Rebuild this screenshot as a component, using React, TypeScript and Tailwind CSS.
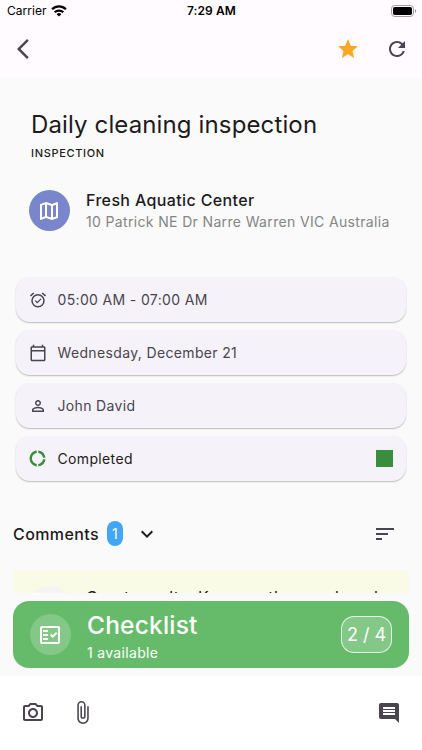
import type { ReactNode } from "react";
import {
  MdArrowBackIosNew,
  MdAttachFile,
  MdComment,
  MdExpandMore,
  MdOutlineCalendarToday,
  MdOutlineFactCheck,
  MdOutlineMap,
  MdOutlinePhotoCamera,
  MdPersonOutline,
  MdRefresh,
  MdSort,
  MdStar,
} from "react-icons/md";

function WifiIcon() {
  return (
    <svg width="16" height="12" viewBox="0 0 16 12" fill="none" stroke="#000" strokeWidth="2.300">
      <path d="M1.100 4.300a9.800 9.800 0 0 1 13.800 0" />
      <path d="M3.700 7.300a6.100 6.100 0 0 1 8.600 0" />
      <path d="M8 11.600 5.600 9.200a3.400 3.400 0 0 1 4.800 0Z" fill="#000" stroke="none" />
    </svg>
  );
}

function BatteryIcon() {
  return (
    <svg width="26" height="12" viewBox="0 0 26 12" fill="none">
      <rect x="0.5" y="0.5" width="22" height="11" rx="3.2" stroke="#a09ea1" />
      <rect x="2" y="2" width="19" height="8" rx="1.8" fill="#000" />
      <path d="M24 4.200v3.600c.8-.3 1.200-1 1.200-1.800S24.800 4.500 24 4.200Z" fill="#8f8d90" />
    </svg>
  );
}

function AlarmIcon() {
  return (
    <svg width="18" height="18" viewBox="0 0 24 24" fill="none" stroke="#49454f" strokeWidth="2">
      <circle cx="12" cy="13" r="8" />
      <path d="m1.900 6.500 4.600-3.900M22.100 6.500l-4.600-3.900" />
      <path d="m8.300 12.800 2.700 2.700 5-5" strokeWidth="1.700" />
    </svg>
  );
}

function ProgressRing() {
  return (
    <svg width="19" height="19" viewBox="0 0 24 24" fill="#388e3c" className="-ml-px">
      <path d="M11 5.080V2c-5 .5-9 4.810-9 10s4 9.500 9 10v-3.080c-3-.48-6-3.400-6-6.920s3-6.440 6-6.920zM18.970 11H22c-.47-5-4-8.530-9-9v3.080c3 .43 5.540 2.920 5.970 5.920zM13 18.920V22c5-.47 8.530-4 9-9h-3.030c-.43 3-2.970 5.490-5.970 5.920z" />
    </svg>
  );
}

function DetailCard({ icon, children, end }: { icon: ReactNode; children: ReactNode; end?: ReactNode }) {
  return (
    <div className="flex h-[45px] items-center rounded-[14px] bg-[#f6f2f9] pr-[13px] pl-3 shadow-[0_1px_1.5px_rgba(0,0,0,0.25)]">
      <span className="flex w-5 justify-center">{icon}</span>
      <span className="ml-[9.500px] flex-1 text-[14px] leading-5 tracking-[0.350px]">{children}</span>
      {end}
    </div>
  );
}

export default function App() {
  return (
    <div className="flex h-[750px] w-[422px] flex-col overflow-hidden bg-[#fafafa] font-['Inter',sans-serif] text-[#1d1b20]">
      <header className="h-[78px] shrink-0 bg-[#fffbff]">
        <div className="grid h-[22px] grid-cols-3 items-center pr-[5px] pl-[7px] text-black">
          <div className="flex items-center gap-[4px] text-[12px] tracking-[0.050px]">
            Carrier <WifiIcon />
          </div>
          <div className="-ml-px text-center text-[12px] font-semibold tracking-[0.100px]">7:29 AM</div>
          <div className="flex justify-end"><BatteryIcon /></div>
        </div>
        <div className="flex h-[54px] items-center pr-[13px] pl-[10.500px] text-[#49454f]">
          <MdArrowBackIosNew size={24} />
          <span className="flex-1" />
          <MdStar size={24} color="#f9a825" />
          <MdRefresh size={24} className="ml-[25px]" />
        </div>
      </header>

      <main className="flex h-[515px] shrink-0 flex-col overflow-hidden">
        <div className="pt-[31px] pl-[31px]">
          <h1 className="h-8 text-[24px] leading-8 tracking-[0.130px] whitespace-nowrap">Daily cleaning inspection</h1>
          <p className="mt-[4px] text-[11px] leading-4 font-medium tracking-[0.670px]">INSPECTION</p>
        </div>
        <div className="mt-[29px] flex h-[41px] items-start pl-[29px]">
          <span className="flex size-[41px] items-center justify-center rounded-full bg-[#7986cb] pr-px text-white">
            <MdOutlineMap size={24} />
          </span>
          <div className="-mt-px ml-4 whitespace-nowrap">
            <p className="text-[16px] leading-[22px] font-medium tracking-[0.360px]">Fresh Aquatic Center</p>
            <p className="text-[14px] leading-[22px] tracking-[0.350px] text-[#858585]">10 Patrick NE Dr Narre Warren VIC Australia</p>
          </div>
        </div>
        <div className="mt-[46px] flex flex-col gap-2 px-4 text-[#49454f]">
          <DetailCard icon={<AlarmIcon />}>05:00 AM - 07:00 AM</DetailCard>
          <DetailCard icon={<MdOutlineCalendarToday size={18} />}>Wednesday, December 21</DetailCard>
          <DetailCard icon={<MdPersonOutline size={18} />}>John David</DetailCard>
          <DetailCard icon={<ProgressRing />} end={<span className="size-[17px] bg-[#388e3c]" />}>
            <span className="text-[#1d1b20]">Completed</span>
          </DetailCard>
        </div>
        <div className="mt-[40px] flex h-[25px] items-center pr-[25px] pl-[13px]">
          <h2 className="text-[16px] leading-6 font-medium tracking-[0.400px]">Comments</h2>
          <span className="ml-2 flex h-[25px] w-4 items-center justify-center rounded-full bg-[#42a5f5] text-[14px] text-white">1</span>
          <MdExpandMore size={24} className="ml-[12px]" />
          <span className="flex-1" />
          <MdSort size={24} className="text-[#49454f]" />
        </div>
        <div className="mx-[13px] mt-[24px] flex h-[23px] shrink-0 rounded-t-[3px] bg-[#f9fbe7] pt-[16px] pl-[16px]">
          <span className="size-[41px] shrink-0 rounded-full bg-[#f4f4f2]" />
          <p className="ml-4 text-[16px] leading-[22px] tracking-[0.430px] whitespace-nowrap">Great results. Keep up the good work</p>
        </div>
      </main>

      <section className="flex h-[83px] shrink-0 items-start px-[13px] pt-2">
        <div className="flex h-[67px] w-full items-center rounded-[16px] bg-[#66bb6a] pr-[17px] pl-[17px] text-white">
          <span className="flex size-[41px] items-center justify-center rounded-full bg-white/20 pr-px">
            <MdOutlineFactCheck size={24} />
          </span>
          <div className="ml-4 flex-1 pt-[3px] whitespace-nowrap">
            <p className="text-[24.500px] leading-8 font-medium tracking-[0.200px]">Checklist</p>
            <p className="mt-px text-[14px] leading-[22px] tracking-[0.320px]">1 available</p>
          </div>
          <span className="flex h-[37px] w-[51px] items-center justify-center rounded-[13px] border border-white/80 bg-white/20 text-[18px]">2 / 4</span>
        </div>
      </section>

      <nav className="flex min-h-0 flex-1 items-center bg-white pr-[21px] pb-px pl-[21px] text-[#49454f]">
        <MdOutlinePhotoCamera size={24} />
        <MdAttachFile size={25} className="ml-[24.500px]" />
        <span className="flex-1" />
        <MdComment size={24} />
      </nav>
    </div>
  );
}
